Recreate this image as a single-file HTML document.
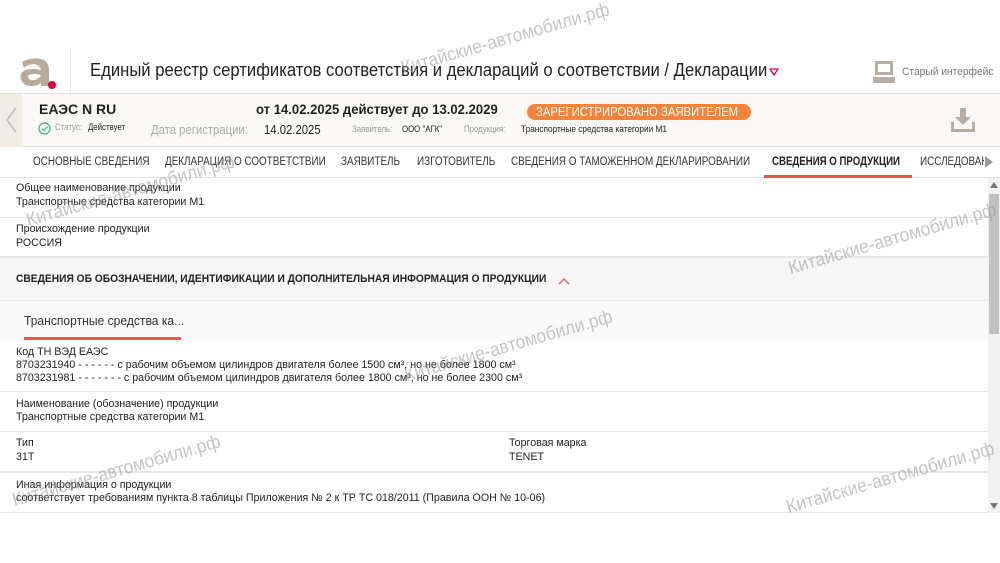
<!DOCTYPE html>
<html><head><meta charset="utf-8"><style>
*{margin:0;padding:0;box-sizing:border-box}
body{width:1000px;height:563px;overflow:hidden;background:#fff;font-family:"Liberation Sans",sans-serif;color:#222;position:relative}
.abs{position:absolute;white-space:nowrap}
.n{transform:scaleX(.87);transform-origin:left top}
.wm{position:absolute;color:rgba(150,150,150,.55);font-size:19px;transform:rotate(-16deg) scaleX(.92);transform-origin:left bottom;white-space:nowrap;z-index:10}
.row{position:absolute;left:0;width:988px;border-bottom:1px solid #e6e6e6}
.lbl,.val{font-size:11px;color:#222;position:absolute;left:16px;white-space:nowrap;transform:scaleX(.97);transform-origin:left top}
.tab{position:absolute;top:156px;font-size:11.5px;color:#333;white-space:nowrap;transform:scaleX(.86);transform-origin:left top}
</style></head><body>
<div class="abs" style="left:0;top:93px;width:1000px;border-top:1px solid #e2e2e2"></div>
<div class="abs" style="left:70px;top:50px;height:43px;border-left:1px solid #e6e6e6"></div>
<svg class="abs" style="left:18px;top:56px" width="40" height="34" viewBox="0 0 40 34"><path d="M4 6 Q16 0 26 4 Q32 8 31 18 L31 30 L23 30 L23 27 Q16 32 8 29 Q1 25 3 18 Q6 12 18 13 L23 14 Q22 9 16 8 Q10 8 6 12 Z M10 20 Q10 25 17 24 Q22 22 23 19 L17 18 Q11 18 10 20Z" fill="#b7ab9a"/><circle cx="34" cy="29" r="4" fill="#e4003a"/></svg>
<div class="abs" style="left:90px;top:60px;font-size:18px;color:#222;transform:scaleX(.925);transform-origin:left top">Единый реестр сертификатов соответствия и деклараций о соответствии / Декларации</div>
<svg class="abs" style="left:769px;top:68px" width="10" height="8"><path d="M1 1 H9 L5 7Z" fill="none" stroke="#e4003a" stroke-width="1.3"/></svg>
<svg class="abs" style="left:873px;top:60px" width="24" height="24" viewBox="0 0 24 24"><rect x="2" y="1" width="18" height="14" fill="#b5aea5"/><rect x="5" y="4" width="12" height="8" fill="#fff"/><rect x="0" y="17" width="22" height="6" fill="#b5aea5"/></svg>
<div class="abs" style="left:902px;top:66px;font-size:11px;color:#777;transform:scaleX(.93);transform-origin:left top">Старый интерфейс</div>
<div class="abs" style="left:0;top:94px;width:1000px;height:53px;background:#faf8f4;border-bottom:1px solid #e2e2e2"></div>
<div class="abs" style="left:0;top:94px;width:22px;height:53px;background:#f0ece4"></div>
<svg class="abs" style="left:4px;top:106px" width="14" height="28"><path d="M12 2 L3 14 L12 26" fill="none" stroke="#bbb" stroke-width="1.5"/></svg>
<div class="abs" style="left:39px;top:101px;font-size:14px;font-weight:bold">ЕАЭС N RU</div>
<svg class="abs" style="left:38px;top:122px" width="13" height="13"><circle cx="6.5" cy="6.5" r="5.5" fill="none" stroke="#3ab08f" stroke-width="1.2"/><path d="M4 6.5 L6 8.5 L9.5 4.5" fill="none" stroke="#3ab08f" stroke-width="1.2"/></svg>
<div class="abs n" style="left:55px;top:122px;font-size:9px;color:#999">Статус:</div>
<div class="abs n" style="left:88px;top:122px;font-size:9px;color:#222">Действует</div>
<div class="abs n" style="left:151px;top:122px;font-size:13px;color:#aaa">Дата регистрации:</div>
<div class="abs n" style="left:264px;top:122px;font-size:13px;color:#222">14.02.2025</div>
<div class="abs n" style="left:352px;top:124px;font-size:9px;color:#999">Заявитель:</div>
<div class="abs n" style="left:402px;top:124px;font-size:9px;color:#222">ООО "АГК"</div>
<div class="abs n" style="left:464px;top:124px;font-size:9px;color:#999">Продукция:</div>
<div class="abs" style="left:521px;top:124px;font-size:9px;color:#222;transform:scaleX(.92);transform-origin:left top">Транспортные средства категории М1</div>
<div class="abs" style="left:256px;top:102px;font-size:13.5px;font-weight:bold;transform:scaleX(.97);transform-origin:left top">от 14.02.2025 действует до 13.02.2029</div>
<div class="abs" style="left:527px;top:104px;width:224px;height:16px;background:#f6833a;border-radius:8px"></div>
<div class="abs" style="left:536px;top:104px;color:#fff;font-size:13px;line-height:16px;transform:scaleX(.87);transform-origin:left top">ЗАРЕГИСТРИРОВАНО ЗАЯВИТЕЛЕМ</div>
<svg class="abs" style="left:951px;top:108px" width="24" height="24" viewBox="0 0 24 24"><path d="M9 0 H15 V9 H20 L12 17 L4 9 H9Z" fill="#b5aea5"/><path d="M0 14 H3 V21 H21 V14 H24 V24 H0Z" fill="#b5aea5"/></svg>
<div class="abs" style="left:0;top:147px;width:1000px;height:31px;background:#fff;border-bottom:1px solid #e2e2e2"></div>
<div class="tab" style="left:33px">ОСНОВНЫЕ СВЕДЕНИЯ</div>
<div class="tab" style="left:165px">ДЕКЛАРАЦИЯ О СООТВЕТСТВИИ</div>
<div class="tab" style="left:341px">ЗАЯВИТЕЛЬ</div>
<div class="tab" style="left:417px">ИЗГОТОВИТЕЛЬ</div>
<div class="tab" style="left:511px">СВЕДЕНИЯ О ТАМОЖЕННОМ ДЕКЛАРИРОВАНИИ</div>
<div class="tab" style="left:772px;color:#222;font-weight:bold;transform:scaleX(.84)">СВЕДЕНИЯ О ПРОДУКЦИИ</div>
<div class="abs" style="left:764px;top:175px;width:148px;height:3px;background:#e2594d"></div>
<div class="abs" style="left:920px;top:147px;width:64px;height:30px;overflow:hidden"><div class="tab" style="left:0;top:9px">ИССЛЕДОВАНИЯ</div></div>
<svg class="abs" style="left:985px;top:156px" width="8" height="12"><path d="M0 0 L8 6 L0 12Z" fill="#999"/></svg>
<div class="abs" style="left:988px;top:178px;width:12px;height:335px;background:#f1f1f1"></div>
<div class="abs" style="left:989px;top:194px;width:10px;height:140px;background:#c1c1c1"></div>
<svg class="abs" style="left:990px;top:182px" width="8" height="6"><path d="M4 0 L8 6 H0Z" fill="#777"/></svg>
<svg class="abs" style="left:990px;top:503px" width="8" height="6"><path d="M0 0 H8 L4 6Z" fill="#777"/></svg>
<div class="row" style="top:178px;height:40px"><div class="lbl" style="top:4px">Общее наименование продукции</div><div class="val" style="top:18px">Транспортные средства категории М1</div></div>
<div class="row" style="top:218px;height:40px;border-bottom:2px solid #e6e6e6"><div class="lbl" style="top:5px">Происхождение продукции</div><div class="val" style="top:19px">РОССИЯ</div></div>
<div class="row" style="top:258px;height:43px;background:#f6f6f6"><div class="abs" style="left:16px;top:15px;font-size:11px;font-weight:bold;transform:scaleX(.93);transform-origin:left top">СВЕДЕНИЯ ОБ ОБОЗНАЧЕНИИ, ИДЕНТИФИКАЦИИ И ДОПОЛНИТЕЛЬНАЯ ИНФОРМАЦИЯ О ПРОДУКЦИИ</div>
<svg class="abs" style="left:558px;top:19px" width="12" height="8"><path d="M1 7 L6 2 L11 7" fill="none" stroke="#e2594d" stroke-width="1.3"/></svg></div>
<div class="abs" style="left:0;top:301px;width:988px;height:40px;background:#fafafa"></div>
<div class="abs" style="left:24px;top:313px;font-size:13px;color:#333;transform:scaleX(.93);transform-origin:left top">Транспортные средства ка...</div>
<div class="abs" style="left:24px;top:337px;width:157px;height:3px;background:#e2594d"></div>
<div class="row" style="top:341px;height:51px"><div class="lbl" style="top:5px">Код ТН ВЭД ЕАЭС</div><div class="val" style="top:18px">8703231940 - - - - - - с рабочим объемом цилиндров двигателя более 1500 см³, но не более 1800 см³</div><div class="val" style="top:31px">8703231981 - - - - - - - с рабочим объемом цилиндров двигателя более 1800 см³, но не более 2300 см³</div></div>
<div class="row" style="top:392px;height:40px"><div class="lbl" style="top:6px">Наименование (обозначение) продукции</div><div class="val" style="top:19px">Транспортные средства категории М1</div></div>
<div class="row" style="top:432px;height:41px;border-bottom:2px solid #e6e6e6"><div class="lbl" style="top:5px">Тип</div><div class="val" style="top:19px">31T</div><div class="lbl" style="left:509px;top:5px">Торговая марка</div><div class="val" style="left:509px;top:19px">TENET</div></div>
<div class="row" style="top:473px;height:40px"><div class="lbl" style="top:6px">Иная информация о продукции</div><div class="val" style="top:19px">соответствует требованиям пункта 8 таблицы Приложения № 2 к ТР ТС 018/2011 (Правила ООН № 10-06)</div></div>
<div class="wm" style="left:405px;top:58px">Китайские-автомобили.рф</div>
<div class="wm" style="left:30px;top:210px">Китайские-автомобили.рф</div>
<div class="wm" style="left:792px;top:258px">Китайские-автомобили.рф</div>
<div class="wm" style="left:408px;top:365px">Китайские-автомобили.рф</div>
<div class="wm" style="left:790px;top:497px">Китайские-автомобили.рф</div>
<div class="wm" style="left:16px;top:490px">Китайские-автомобили.рф</div>
</body></html>
